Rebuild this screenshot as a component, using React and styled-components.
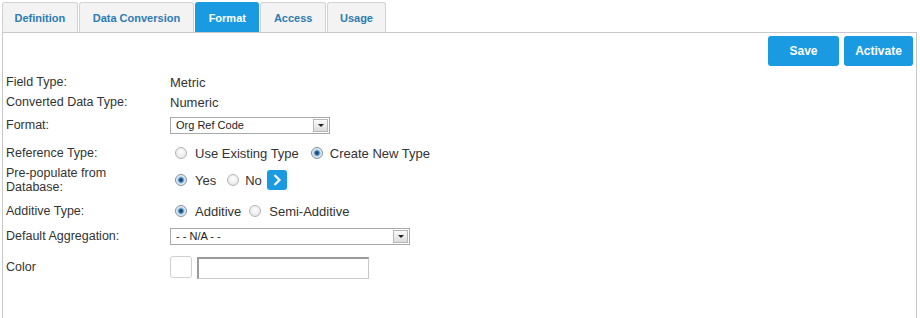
import React from 'react';
import styled, { createGlobalStyle, css } from 'styled-components';

const GlobalStyle = createGlobalStyle`
  body {
    margin: 0;
    background: #fff;
    font-family: Arial, "Liberation Sans", sans-serif;
    color: #333;
  }
`;

const BLUE = '#1a9ae0';

// styles
const Page = styled.div`
  padding: 2px 0 0 2px;
  width: 915px;
`;

const TabBar = styled.div`
  display: flex;
  gap: 1px;
  height: 30px;
`;

const Tab = styled.div`
  display: flex;
  align-items: center;
  padding: 0 ${props => props.$pad || 12}px;
  border: 1px solid #d2d2d2;
  border-bottom: none;
  border-radius: 3px 3px 0 0;
  background: #f3f3f3;
  color: #2d7bb5;
  font-size: 11px;
  font-weight: bold;

  ${props => props.$active && css`
    background: ${BLUE};
    border-color: ${BLUE};
    color: #fff;
  `}
`;

const Panel = styled.div`
  border: 1px solid #c8c8c8;
  border-bottom: none;
  height: 286px;
  box-sizing: border-box;
  padding: 3px 3px 0 3px;
`;

const Toolbar = styled.div`
  display: flex;
  justify-content: flex-end;
  gap: 5px;
`;

const Button = styled.button`
  height: 30px;
  padding: 0;
  border: none;
  border-radius: 3px;
  background: ${BLUE};
  color: #fff;
  font-family: Arial, "Liberation Sans", sans-serif;
  font-size: 12px;
  font-weight: bold;
  width: ${props => props.$w}px;
`;

const Form = styled.div`
  display: flex;
  flex-direction: column;
  margin-top: 6px;
`;

const Row = styled.div`
  display: grid;
  grid-template-columns: 164px 1fr;
  align-items: center;
  height: ${props => props.$h}px;
  margin-top: ${props => props.$mt || 0}px;
  font-size: 13px;
`;

const Label = styled.div`
  line-height: 14px;
  font-size: 12.5px;
`;

const Value = styled.div`
  display: flex;
  align-items: center;
`;

const Select = styled.div`
  display: flex;
  align-items: center;
  justify-content: space-between;
  width: ${props => props.$w}px;
  height: 17px;
  box-sizing: border-box;
  border: 1px solid #a9a9a9;
  padding: 0 1px 0 5px;
  font-size: 11px;
  color: #222;
  background: #fff;
`;

const SelectArrow = styled.span`
  width: 15px;
  height: 13px;
  box-sizing: border-box;
  border: 1px solid #b8b8b8;
  background: linear-gradient(#fafafa, #dcdcdc);
  display: flex;
  align-items: center;
  justify-content: center;

  &::after {
    content: '';
    border-left: 3px solid transparent;
    border-right: 3px solid transparent;
    border-top: 3px solid #222;
  }
`;

const RadioOption = styled.label`
  display: flex;
  align-items: center;
  margin-left: ${props => props.$ml || 0}px;
`;

const RadioDot = styled.span`
  width: 12px;
  height: 12px;
  box-sizing: border-box;
  border-radius: 50%;
  border: 1px solid #b4b4b4;
  background: radial-gradient(circle at 50% 40%, #fff 0%, #e9e9e9 70%, #d6d6d6 100%);
  margin: 0 ${props => props.$gap || 8}px 0 5px;

  ${props => props.$checked && css`
    border-color: #7f8e9c;
    background: radial-gradient(circle at 50% 50%, #1b3a58 0%, #2d6a9f 28%, #9cc3e3 42%, #e8f0f7 62%, #d3dce4 100%);
  `}
`;

const GoButton = styled.span`
  width: 20px;
  height: 20px;
  border-radius: 3px;
  background: ${BLUE};
  display: flex;
  align-items: center;
  justify-content: center;
  margin-left: 5px;
`;

const Swatch = styled.span`
  width: 22px;
  height: 22px;
  box-sizing: border-box;
  border: 1px solid #d0d0d0;
  border-radius: 3px;
  background: #fff;
`;

const TextInput = styled.span`
  width: 172px;
  height: 22px;
  box-sizing: border-box;
  margin-left: 5px;
  margin-top: 3px;
  border: 1px solid #c8c8c8;
  border-top: 2px solid #9a9a9a;
  border-left: 2px solid #9a9a9a;
  background: #fff;
`;

const Radio = ({ checked, label, ml, gap }) => (
  <RadioOption $ml={ml}>
    <RadioDot $checked={checked} $gap={gap} />
    {label}
  </RadioOption>
);

// component
const App = () => (
  <>
    <GlobalStyle />
    <Page>
      <TabBar>
        <Tab $pad={11.5}>Definition</Tab>
        <Tab $pad={13}>Data Conversion</Tab>
        <Tab $pad={12.5} $active>Format</Tab>
        <Tab $pad={12.5}>Access</Tab>
        <Tab $pad={12}>Usage</Tab>
      </TabBar>
      <Panel>
        <Toolbar>
          <Button $w={71}>Save</Button>
          <Button $w={69}>Activate</Button>
        </Toolbar>
        <Form>
          <Row $h={20}>
            <Label>Field Type:</Label>
            <Value>Metric</Value>
          </Row>
          <Row $h={20}>
            <Label>Converted Data Type:</Label>
            <Value>Numeric</Value>
          </Row>
          <Row $h={22} $mt={2}>
            <Label>Format:</Label>
            <Value>
              <Select $w={160}>Org Ref Code<SelectArrow /></Select>
            </Value>
          </Row>
          <Row $h={22} $mt={6}>
            <Label>Reference Type:</Label>
            <Value>
              <Radio label="Use Existing Type" />
              <Radio checked label="Create New Type" ml={7} gap={7} />
            </Value>
          </Row>
          <Row $h={28} $mt={2}>
            <Label>Pre-populate from<br />Database:</Label>
            <Value>
              <Radio checked label="Yes" />
              <Radio label="No" ml={6} gap={6} />
              <GoButton>
                <svg width="12" height="14" viewBox="0 0 12 14">
                  <path d="M3.5 2 L8.5 7 L3.5 12" fill="none" stroke="#fff" strokeWidth="2.2" />
                </svg>
              </GoButton>
            </Value>
          </Row>
          <Row $h={22} $mt={6}>
            <Label>Additive Type:</Label>
            <Value>
              <Radio checked label="Additive" />
              <Radio label="Semi-Additive" ml={3} gap={8} />
            </Value>
          </Row>
          <Row $h={22} $mt={3}>
            <Label>Default Aggregation:</Label>
            <Value>
              <Select $w={240}>- - N/A - -<SelectArrow /></Select>
            </Value>
          </Row>
          <Row $h={24} $mt={7}>
            <Label>Color</Label>
            <Value>
              <Swatch />
              <TextInput />
            </Value>
          </Row>
        </Form>
      </Panel>
    </Page>
  </>
);

export default App;
